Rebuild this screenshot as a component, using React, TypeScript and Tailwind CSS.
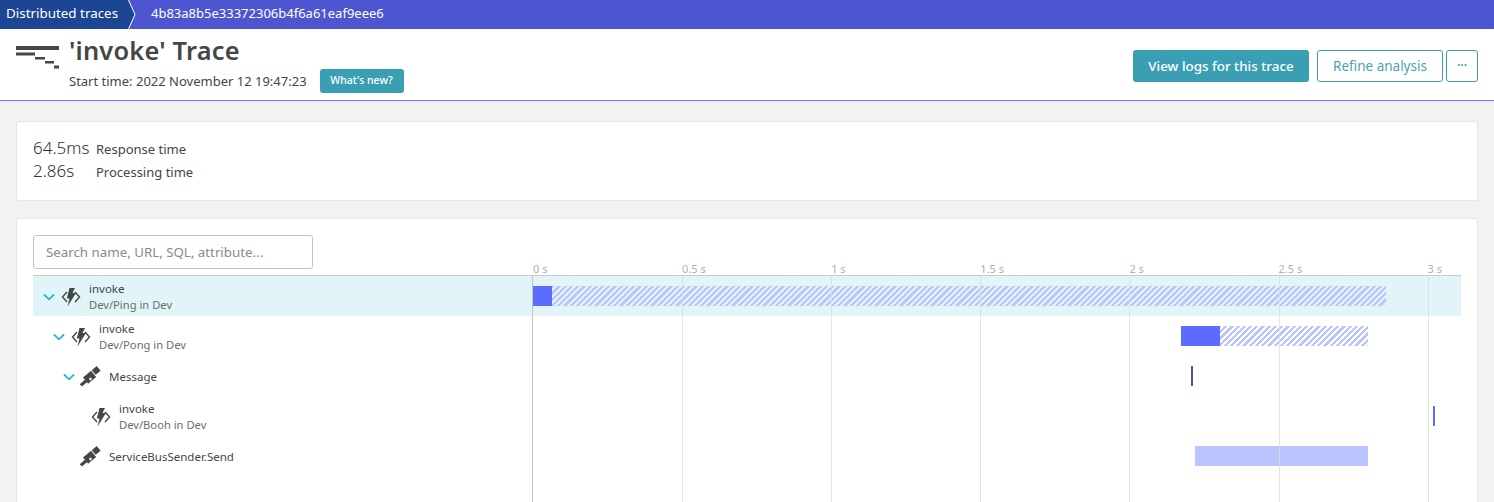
const SEC = 298.2

type Row = {
  name: string
  sub?: string
  indent: number
  icon: "fn" | "scope"
  open: boolean
  selected?: boolean
  start: number
  total: number
  self: number
  kind: "hatch" | "tick" | "tickDark" | "plain"
}

const rows: Row[] = [
  { name: "invoke", sub: "Dev/Ping in Dev", indent: 0, icon: "fn", open: true, selected: true, start: 0, total: 2.862, self: 0.064, kind: "hatch" },
  { name: "invoke", sub: "Dev/Pong in Dev", indent: 10, icon: "fn", open: true, start: 2.173, total: 0.628, self: 0.131, kind: "hatch" },
  { name: "Message", indent: 20, icon: "scope", open: true, start: 2.207, total: 0.007, self: 0, kind: "tickDark" },
  { name: "invoke", sub: "Dev/Booh in Dev", indent: 30, icon: "fn", open: false, start: 3.018, total: 0.007, self: 0, kind: "tick" },
  { name: "ServiceBusSender.Send", indent: 20, icon: "scope", open: false, start: 2.22, total: 0.581, self: 0, kind: "plain" },
]

const ticks = ["0 s", "0.5 s", "1 s", "1.5 s", "2 s", "2.5 s", "3 s"]

function FnIcon() {
  return (
    <svg width="20" height="20" viewBox="0 0 20 20" className="mt-0.5 shrink-0">
      <path d="M6 5 1.500 10 6 15M14 5l4.500 5-4.500 5" fill="none" stroke="#454646" strokeWidth="1.400" />
      <path d="M8.500 1h5.500L11.500 6H15L6.500 19.500l2-8H5.800z" fill="#454646" />
    </svg>
  )
}

function ScopeIcon() {
  return (
    <svg width="21" height="21" viewBox="0 0 21 21" className="shrink-0">
      <g transform="rotate(-40 10.500 10.500)" fill="#454646">
        <rect x="-2.500" y="9.500" width="7" height="3" />
        <rect x="4" y="6.500" width="10.500" height="8" />
        <rect x="15.500" y="6.500" width="6.500" height="6" />
      </g>
      <circle cx="10.500" cy="13" r="1.700" fill="#fff" stroke="#454646" strokeWidth="0.800" />
    </svg>
  )
}

function Chevron() {
  return (
    <svg width="12" height="8" viewBox="0 0 12 8" className="mt-0.5 shrink-0">
      <path d="M1 1.500 6 6.300l5-4.800" fill="none" stroke="#2ab6c8" strokeWidth="1.800" />
    </svg>
  )
}

function TraceBar({ row }: { row: Row }) {
  const left = row.start * SEC
  const width = row.total * SEC
  if (row.kind === "tick" || row.kind === "tickDark") {
    return (
      <div
        className={`absolute top-[10px] h-5 w-0.5 ${row.kind === "tick" ? "bg-[#5b6cff]" : "bg-[#4b55a8]"}`}
        style={{ left }}
      />
    )
  }
  if (row.kind === "plain") {
    return <div className="absolute top-[10px] h-5 bg-[#bcc4fd]" style={{ left, width }} />
  }
  return (
    <div
      className="absolute top-[10px] flex h-5 bg-[repeating-linear-gradient(135deg,#bcc4fd_0,#bcc4fd_2.3px,transparent_2.3px,transparent_4.4px)]"
      style={{ left, width }}
    >
      <div className="h-full bg-[#5b6cff]" style={{ width: row.self * SEC }} />
    </div>
  )
}

export default function App() {
  return (
    <div className="h-[502px] overflow-hidden bg-[#f2f2f2] font-['Noto_Sans',sans-serif] text-[#454646]">
      <nav className="flex h-[29px] items-center bg-[#4e55d1] text-white">
        <div className="relative flex h-full w-[129px] items-center bg-[#1c4594] pb-0.5 pl-[6px] text-[13.4px]">
          Distributed traces
          <svg width="10" height="29" viewBox="0 0 10 29" className="absolute left-[127px] top-0">
            <path d="M0 0h1.500L8 14.500 1.500 29H0z" fill="#1c4594" />
            <path d="M1.500 0 8 14.500 1.500 29" fill="none" stroke="#fff" strokeWidth="1" />
          </svg>
        </div>
        <span className="ml-[22px] pb-0.5 text-[13px]">4b83a8b5e33372306b4f6a61eaf9eee6</span>
      </nav>

      <header className="flex h-[72px] items-start justify-between border-b border-[#6b75ff] bg-white px-4">
        <div className="flex pt-[6px]">
          <svg width="44" height="24" viewBox="0 0 44 24" className="mt-[11px]">
            <path d="M0 0h43v4H0zM0 6.500h19v3H0zM19 11h10v2.500H19zM29 15h9v2.500h-9zM38 19.500h5v3h-5z" fill="#454646" />
          </svg>
          <div className="ml-[9px]">
            <h1 className="text-[25.4px] font-semibold leading-[30px] tracking-[0.2px]">'invoke' Trace</h1>
            <div className="mt-1 flex items-center">
              <span className="pt-0.5 text-[13px]">Start time: 2022 November 12 19:47:23</span>
              <span className="ml-[13px] flex h-6 w-[84px] items-center justify-center rounded-[3px] bg-[#3a9fb2] text-[10.5px] font-medium text-white">
                What's new?
              </span>
            </div>
          </div>
        </div>
        <div className="flex items-center pt-[21px]">
          <button className="h-8 w-[176px] rounded-[3px] bg-[#3a9fb2] text-[13.4px] font-medium text-white">
            View logs for this trace
          </button>
          <button className="ml-2 h-8 w-[126px] rounded-[3px] border border-[#3a9fb2] text-[13.5px] text-[#4f9fb0]">
            Refine analysis
          </button>
          <button className="ml-[3px] h-8 w-[32px] rounded-[3px] border border-[#3a9fb2] text-[12px] font-semibold text-[#3a9fb2]">
            ···
          </button>
        </div>
      </header>

      <div className="px-4 pt-5">
        <section className="h-[80px] rounded-[3px] border border-[#e6e6e6] bg-white pl-4 pt-[14px]">
          <div className="grid grid-cols-[63px_auto] grid-rows-[23px_23px] items-baseline leading-[23px]">
            <span className="text-[17px] font-light text-[#333]">64.5ms</span>
            <span className="text-[13px]">Response time</span>
            <span className="text-[17px] font-light text-[#333]">2.86s</span>
            <span className="text-[13px]">Processing time</span>
          </div>
        </section>

        <section className="mt-[17px] h-[300px] rounded-[3px] border border-[#e6e6e6] bg-white px-4 pt-4">
          <div className="flex h-[34px] w-[280px] items-center rounded-[3px] border border-[#c4c4c4] pl-3 pt-0.5 text-[13.3px] text-[#8a8a8a]">
            Search name, URL, SQL, attribute...
          </div>
          <div className="relative mt-1.5 border-t border-[#c9cccc]">
            <div className="pointer-events-none absolute left-[499px] top-0 z-10 h-[240px] w-px bg-[#c4c4c4]" />
            {ticks.map((t, i) => (
              <div key={t} className="pointer-events-none absolute left-[499px] top-[-14px] z-10 h-[240px]" style={{ marginLeft: i * 149.1 }}>
                {i > 0 && <div className="absolute bottom-0 left-px top-[14px] w-px bg-[#dcdede]/80" />}
                <span className="absolute left-px top-0 whitespace-nowrap text-[11px] leading-[14px] text-[#b0b0b0]">{t}</span>
              </div>
            ))}
            {rows.map((row, i) => (
              <div key={i} className={`flex h-10 ${row.selected ? "bg-[#e1f4f7]" : ""}`}>
                <div className="flex w-[500px] shrink-0 items-center" style={{ paddingLeft: 10 + row.indent }}>
                  <div className="flex w-[17px] shrink-0 items-center">{row.open && <Chevron />}</div>
                  <div className="flex w-[21px] shrink-0 justify-center">{row.icon === "fn" ? <FnIcon /> : <ScopeIcon />}</div>
                  <div className="ml-2 pt-0.5 leading-4">
                    <div className="text-[11.5px] text-[#454646]">{row.name}</div>
                    {row.sub && <div className="text-[11.2px] text-[#6d6d6d]">{row.sub}</div>}
                  </div>
                </div>
                <div className="relative flex-1">
                  <TraceBar row={row} />
                </div>
              </div>
            ))}
          </div>
        </section>
      </div>
    </div>
  )
}
